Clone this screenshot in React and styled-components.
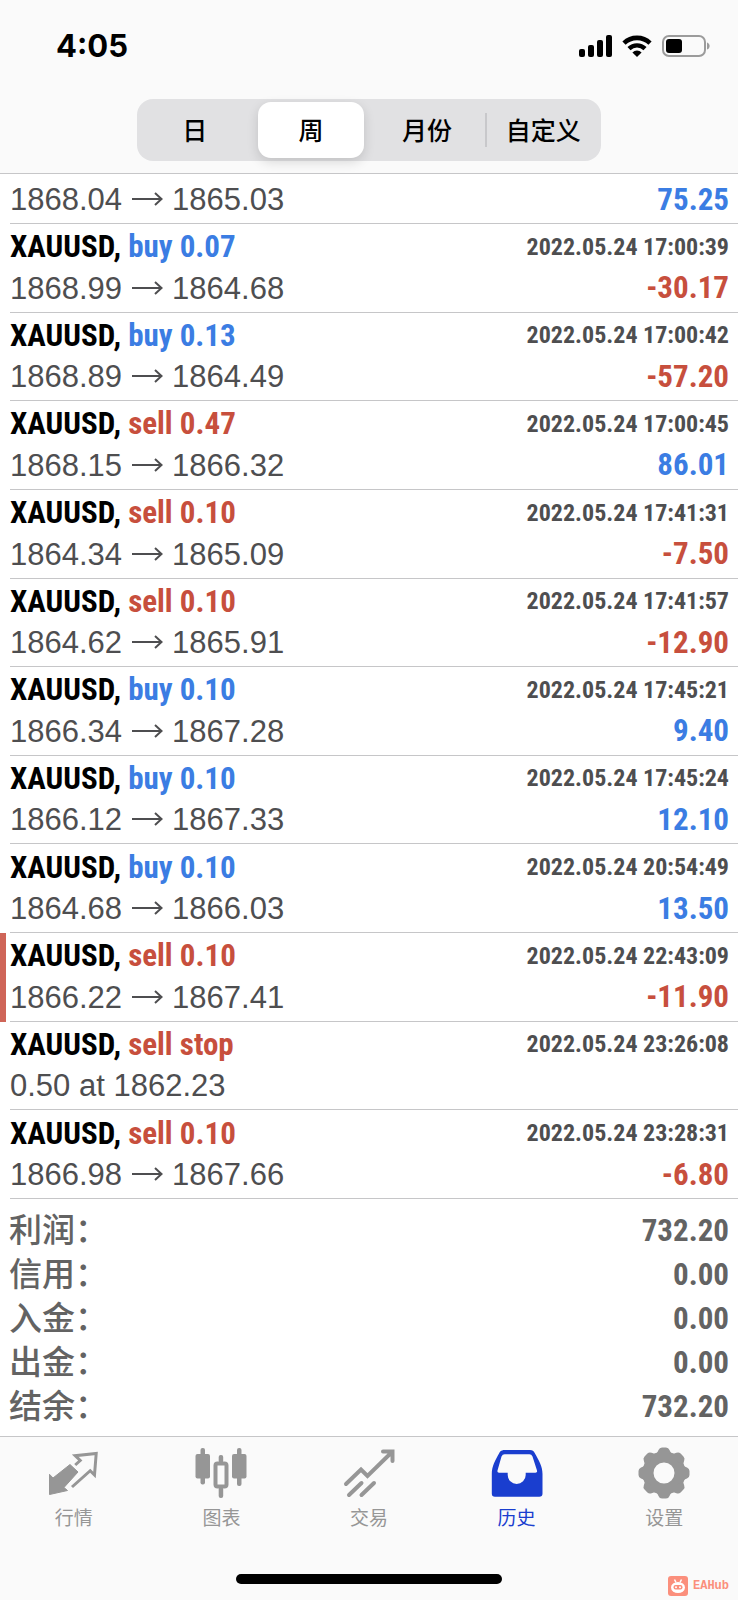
import React, { useState } from 'react';
import styled, { createGlobalStyle } from 'styled-components';

// Styles

const colors = {
  bar: '#fafafa',
  line: '#c6c6c8',
  blue: '#3b7de3',
  red: '#c74f3d',
  text: '#4e4e50',
  grey: '#969696',
  active: '#1a3ecf',
};

const narrow = '"Roboto Condensed", Roboto, sans-serif';
const cjk = '"Noto Sans CJK SC", sans-serif';

const GlobalStyle = createGlobalStyle`
  * {
    box-sizing: border-box;
  }

  body {
    margin: 0;
    background: #fff;
    font-family: "Liberation Sans", ${cjk};
  }

  ul, dl, dd {
    list-style: none;
    margin: 0;
    padding: 0;
  }

  button {
    background: transparent;
    border: 0;
    cursor: pointer;
    font-family: inherit;
    padding: 0;
  }
`;

const Page = styled.div`
  display: flex;
  flex-direction: column;
  min-height: 100vh;
`;

const Header = styled.header`
  background: ${colors.bar};
  border-bottom: 1px solid ${colors.line};
  padding-bottom: 12px;
`;

const StatusBar = styled.div`
  align-items: center;
  display: flex;
  height: 99px;
  justify-content: space-between;
  padding: 0 28px 8px 56px;
`;

const Clock = styled.time`
  font-family: Inter, sans-serif;
  font-size: 31px;
  font-weight: 700;
`;

const StatusIcons = styled.div`
  align-items: center;
  display: flex;
  gap: 10px;
`;

const Segments = styled.div`
  background: #e1e1e3;
  border-radius: 16px;
  display: grid;
  grid-template-columns: repeat(4, 1fr);
  height: 62px;
  margin: 0 auto;
  width: 63%;
`;

const Segment = styled.button`
  border-radius: 13px;
  color: #000;
  font-family: ${cjk};
  font-size: 25px;
  font-weight: 500;
  margin: 3px 5px;
  padding-bottom: 2px;
  ${({ $active }) => $active && `
    background: #fff;
    box-shadow: 0 4px 12px rgba(0, 0, 0, 0.14);
  `}
  ${({ $divided }) => $divided && `
    background: linear-gradient(#c8c8cb, #c8c8cb) left center / 2px 34px no-repeat;
    border-radius: 0;
    margin: 3px 0;
  `}
`;

const Content = styled.main`
  display: flex;
  flex: 1;
  flex-direction: column;
`;

const DealList = styled.ul`
  display: flex;
  flex: 1;
  flex-direction: column;
`;

const Deal = styled.li`
  border-left: 6px solid ${({ $marked }) => ($marked ? '#cf6558' : 'transparent')};
  display: flex;
  flex: ${({ $cut }) => ($cut ? '0 0 50px' : '1 0 88px')};
  padding-left: 4px;
`;

const DealBody = styled.div`
  border-bottom: 1px solid ${colors.line};
  display: flex;
  flex: 1;
  flex-direction: column;
  justify-content: flex-end;
  padding: 0 9px 2px 0;
`;

const Line = styled.div`
  align-items: center;
  display: flex;
  height: 42px;
  justify-content: space-between;
`;

const Instrument = styled.span`
  color: #000;
  font-family: ${narrow};
  font-size: 31px;
  font-weight: 700;
`;

const Side = styled.span`
  color: ${({ $sell }) => ($sell ? colors.red : colors.blue)};
`;

const Stamp = styled.time`
  color: ${colors.text};
  font-family: ${narrow};
  font-size: 24px;
  font-weight: 700;
`;

const Price = styled.span`
  align-items: center;
  color: ${colors.text};
  display: flex;
  font-size: 31px;
  gap: 9px;
`;

const Profit = styled.span`
  color: ${({ $loss }) => ($loss ? colors.red : colors.blue)};
  font-family: ${narrow};
  font-size: 31px;
  font-weight: 700;
  padding-bottom: 2px;
`;

const Summary = styled.dl`
  color: #636363;
  padding: 9px 9px 8px;
`;

const Total = styled.div`
  align-items: center;
  display: flex;
  height: 44px;
  justify-content: space-between;
`;

const TotalLabel = styled.dt`
  font-family: ${cjk};
  font-size: 33px;
  font-weight: 500;
  line-height: 40px;
  padding-bottom: 4px;
`;

const TotalValue = styled.dd`
  font-family: ${narrow};
  font-size: 31px;
  font-weight: 700;
`;

const Footer = styled.footer`
  background: ${colors.bar};
  border-top: 1px solid ${colors.line};
  height: 164px;
  position: relative;
`;

const TabBar = styled.nav`
  display: grid;
  grid-template-columns: repeat(5, 1fr);
  padding-top: 10px;
`;

const Tab = styled.button`
  align-items: center;
  color: ${({ $active }) => ($active ? colors.active : colors.grey)};
  display: flex;
  flex-direction: column;
  font-family: ${cjk};
  font-size: 19px;
  gap: 4px;
  line-height: 28px;
`;

const HomeIndicator = styled.div`
  background: #000;
  border-radius: 5px;
  bottom: 16px;
  height: 10px;
  left: 32%;
  position: absolute;
  right: 32%;
`;

const Watermark = styled.div`
  align-items: center;
  bottom: 4px;
  color: #fb8f7c;
  display: flex;
  font-family: "Liberation Mono", monospace;
  font-size: 12px;
  font-weight: 700;
  gap: 5px;
  position: absolute;
  right: 9px;
`;

// Icons

const SignalIcon = () => (
  <svg width="34" height="22" viewBox="0 0 34 22">
    <rect x="1" y="14" width="6" height="8" rx="2" />
    <rect x="10" y="10" width="6" height="12" rx="2" />
    <rect x="19" y="5" width="6" height="17" rx="2" />
    <rect x="28" y="0" width="6" height="22" rx="2" />
  </svg>
);

const WifiIcon = () => (
  <svg width="30" height="22" viewBox="0 0 30 22" fill="none" stroke="#000">
    <path d="M2 8.2a18.6 18.6 0 0 1 26 0" strokeWidth="4.6" />
    <path d="M7 13.6a11.5 11.5 0 0 1 16 0" strokeWidth="4.4" />
    <path d="M15 22l-4.6-4.6a6.5 6.5 0 0 1 9.2 0z" fill="#000" stroke="none" />
  </svg>
);

const BatteryIcon = () => (
  <svg width="48" height="24" viewBox="0 0 48 24">
    <rect x="1" y="2" width="42" height="20" rx="6" fill="none" stroke="#9b9b9b" strokeWidth="2" />
    <rect x="4" y="5" width="16" height="14" rx="3" />
    <path d="M45 8.5c3.5 1 3.5 6 0 7z" fill="#9b9b9b" />
  </svg>
);

const ArrowIcon = () => (
  <svg width="32" height="16" viewBox="0 0 32 16" fill="none" stroke={colors.text} strokeWidth="2">
    <path d="M1 7h29M24 1l6.5 6-6.5 6" />
  </svg>
);

const QuotesIcon = () => (
  <svg width="52" height="52" viewBox="0 0 52 52">
    <path
      d="M1.5 27.3L5 31 22 17.5l8 7.5-14 15.5 3.5 3L1.5 47.5z"
      fill="currentColor"
      stroke="currentColor"
      strokeLinejoin="round"
    />
    <path
      d="M27.2 18l5-4.5-5-4.8 21-2.2L46.5 28l-4.3-4.3L24 40"
      fill="none"
      stroke="currentColor"
      strokeWidth="3"
    />
  </svg>
);

const ChartIcon = () => (
  <svg width="52" height="52" viewBox="0 0 52 52" fill="currentColor">
    <rect x="0.5" y="7" width="14.5" height="24.5" rx="2" />
    <rect x="5.5" y="1" width="4.5" height="36.5" rx="2" />
    <rect x="37" y="7" width="14.5" height="24.5" rx="2" />
    <rect x="42" y="1" width="4.5" height="38" rx="2" />
    <rect x="23.7" y="8" width="4.5" height="8" rx="2" />
    <rect x="23.7" y="40" width="4.5" height="11" rx="2" />
    <rect x="20.5" y="16.5" width="11" height="23" rx="2" fill="none" stroke="currentColor" strokeWidth="4" />
  </svg>
);

const TradeIcon = () => (
  <svg
    width="52"
    height="52"
    viewBox="0 0 52 52"
    fill="none"
    stroke="currentColor"
    strokeWidth="4"
    strokeLinecap="round"
  >
    <path d="M3 37l15-14.5 6.5 6.5L49 5M40 4.5h9.5V14M6 48l12.5-12M18.500 48L31 36" />
  </svg>
);

const HistoryIcon = () => (
  <svg width="52" height="52" viewBox="0 0 52 52">
    <path
      d="M13 3h26q3.5 0 4.7 3C48 14 51.5 19 51.5 27v19.5q0 3.2-3.2 3.2H4q-3.2 0-3.2-3.2V27C.8 19 4 14 8.3 6 9.5 3 13 3 13 3zM13.5 7.2q-2 0-3 2.3L6.5 23.5q-.6 2.2 1.5 2.2h8.7V28a9 9 0 0 0 18 0v-2.3h9.8q2.1 0 1.5-2.2l-4.5-14q-1-2.3-3-2.3z"
      fill="currentColor"
      fillRule="evenodd"
    />
  </svg>
);

const teeth = [0, 45, 90, 135, 180, 225, 270, 315];

const SettingsIcon = () => (
  <svg width="52" height="52" viewBox="0 0 52 52">
    <circle cx="26" cy="26" r="16" fill="none" stroke="currentColor" strokeWidth="11" />
    {teeth.map((angle) => (
      <path
        key={angle}
        d="M16 8q3-1 4.5-5Q21.5 .5 24 .5h4q2.5 0 3.5 2.500 1.500 4 4.5 5z"
        fill="currentColor"
        transform={`rotate(${angle} 26 26)`}
      />
    ))}
  </svg>
);

const RobotIcon = () => (
  <svg width="20" height="20" viewBox="0 0 20 20">
    <rect width="20" height="20" rx="3" fill="#fb8f7c" />
    <path d="M6.5 3.5l1.5 3M13.5 3.5l-1.5 3" stroke="#fff" strokeWidth="1.5" />
    <ellipse cx="10" cy="11.5" rx="7" ry="5.5" fill="#fff" />
    <rect x="5.5" y="9" width="9" height="4.5" rx="2" fill="#fb8f7c" />
    <circle cx="8" cy="11.2" r="1" fill="#fff" />
    <circle cx="12" cy="11.2" r="1" fill="#fff" />
  </svg>
);

// Data

const periods = ['日', '周', '月份', '自定义'];

const deals = [
  { id: 1, open: '1868.04', close: '1865.03', profit: '75.25' },
  { id: 2, side: 'buy 0.07', time: '2022.05.24 17:00:39', open: '1868.99', close: '1864.68', profit: '-30.17' },
  { id: 3, side: 'buy 0.13', time: '2022.05.24 17:00:42', open: '1868.89', close: '1864.49', profit: '-57.20' },
  { id: 4, side: 'sell 0.47', time: '2022.05.24 17:00:45', open: '1868.15', close: '1866.32', profit: '86.01' },
  { id: 5, side: 'sell 0.10', time: '2022.05.24 17:41:31', open: '1864.34', close: '1865.09', profit: '-7.50' },
  { id: 6, side: 'sell 0.10', time: '2022.05.24 17:41:57', open: '1864.62', close: '1865.91', profit: '-12.90' },
  { id: 7, side: 'buy 0.10', time: '2022.05.24 17:45:21', open: '1866.34', close: '1867.28', profit: '9.40' },
  { id: 8, side: 'buy 0.10', time: '2022.05.24 17:45:24', open: '1866.12', close: '1867.33', profit: '12.10' },
  { id: 9, side: 'buy 0.10', time: '2022.05.24 20:54:49', open: '1864.68', close: '1866.03', profit: '13.50' },
  { id: 10, side: 'sell 0.10', time: '2022.05.24 22:43:09', open: '1866.22', close: '1867.41', profit: '-11.90', marked: true },
  { id: 11, side: 'sell stop', time: '2022.05.24 23:26:08', note: '0.50 at 1862.23' },
  { id: 12, side: 'sell 0.10', time: '2022.05.24 23:28:31', open: '1866.98', close: '1867.66', profit: '-6.80' },
];

const totals = [
  ['利润：', '732.20'],
  ['信用：', '0.00'],
  ['入金：', '0.00'],
  ['出金：', '0.00'],
  ['结余：', '732.20'],
];

const tabs = [
  { label: '行情', Icon: QuotesIcon },
  { label: '图表', Icon: ChartIcon },
  { label: '交易', Icon: TradeIcon },
  { label: '历史', Icon: HistoryIcon },
  { label: '设置', Icon: SettingsIcon },
];

// Components

const DealRow = ({ side, time, open, close, note, profit, marked }) => (
  <Deal $marked={marked} $cut={!side}>
    <DealBody>
      {side && (
        <Line>
          <Instrument>
            XAUUSD, <Side $sell={side.startsWith('sell')}>{side}</Side>
          </Instrument>
          <Stamp>{time}</Stamp>
        </Line>
      )}
      <Line>
        <Price>
          {note || (
            <>
              {open}
              <ArrowIcon />
              {close}
            </>
          )}
        </Price>
        {profit && <Profit $loss={profit.startsWith('-')}>{profit}</Profit>}
      </Line>
    </DealBody>
  </Deal>
);

const App = () => {
  const [period, setPeriod] = useState('周');
  const [tab, setTab] = useState('历史');

  return (
    <Page>
      <GlobalStyle />
      <Header>
        <StatusBar>
          <Clock>4:05</Clock>
          <StatusIcons>
            <SignalIcon />
            <WifiIcon />
            <BatteryIcon />
          </StatusIcons>
        </StatusBar>
        <Segments>
          {periods.map((name, i) => (
            <Segment
              key={name}
              $active={name === period}
              $divided={i === 3 && period === '周'}
              onClick={() => setPeriod(name)}
            >
              {name}
            </Segment>
          ))}
        </Segments>
      </Header>

      <Content>
        <DealList>
          {deals.map((deal) => <DealRow key={deal.id} {...deal} />)}
        </DealList>
        <Summary>
          {totals.map(([label, value]) => (
            <Total key={label}>
              <TotalLabel>{label}</TotalLabel>
              <TotalValue>{value}</TotalValue>
            </Total>
          ))}
        </Summary>
      </Content>

      <Footer>
        <TabBar>
          {tabs.map(({ label, Icon }) => (
            <Tab key={label} $active={label === tab} onClick={() => setTab(label)}>
              <Icon />
              {label}
            </Tab>
          ))}
        </TabBar>
        <HomeIndicator />
        <Watermark>
          <RobotIcon />
          EAHub
        </Watermark>
      </Footer>
    </Page>
  );
};

export default App;
